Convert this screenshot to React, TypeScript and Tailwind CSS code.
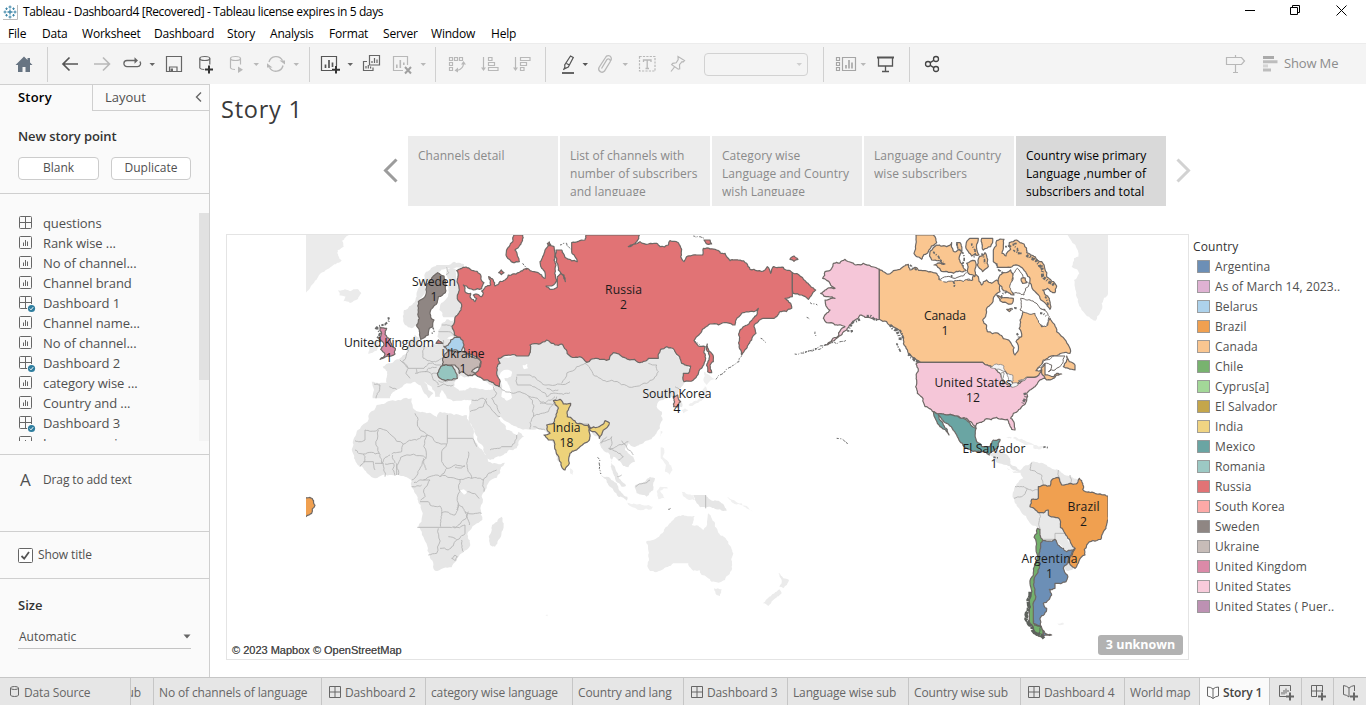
import React from "react";

type Pt = [number, number];

/* ---------- map geometry ---------- */

// Splits sloped segments with a repeatable offset, so coasts look natural; axis-aligned ones stay straight.
function split(a: Pt, b: Pt, depth: number): Pt[] {
  const dx = b[0] - a[0];
  const dy = b[1] - a[1];
  const len = Math.hypot(dx, dy);
  if (depth === 0 || len < 7 || dx === 0 || dy === 0) return [b];
  const s = Math.sin((a[0] + b[0]) * 12.9898 + (a[1] + b[1]) * 78.233) * 43758.5453;
  const r = s - Math.floor(s) - 0.5;
  const k = r * 0.32 * (a[0] < b[0] ? 1 : -1);
  const m: Pt = [(a[0] + b[0]) / 2 - dy * k, (a[1] + b[1]) / 2 + dx * k];
  return [...split(a, m, depth - 1), ...split(m, b, depth - 1)];
}

function shape(points: string, closed = true): string {
  return points
    .split("|")
    .map((part) => {
      const n = part.trim().split(/[\s,]+/).map(Number);
      const pts: Pt[] = [];
      for (let i = 0; i < n.length; i += 2) pts.push([n[i], n[i + 1]]);
      const out: Pt[] = [pts[0]];
      for (let i = 1; i < pts.length; i++) out.push(...split(pts[i - 1], pts[i], 3));
      if (closed) out.push(...split(pts[pts.length - 1], pts[0], 3));
      return "M" + out.map((p) => p[0].toFixed(1) + " " + p[1].toFixed(1)).join("L") + (closed ? "Z" : "");
    })
    .join("");
}

const Land = ({ d, fill = "#e6e6e6" }: { d: string; fill?: string }) => <path d={shape(d)} fill={fill} />;
const Sea = ({ d }: { d: string }) => <path d={shape(d)} fill="#fff" />;
const Country = ({ d, fill }: { d: string; fill: string }) => (
  <path d={shape(d)} fill={fill} stroke="#6e6865" strokeWidth="3.6" strokeLinejoin="round" />
);
const Borders = ({ d }: { d: string }) => <path d={shape(d, false)} fill="none" stroke="#b4b4b4" strokeWidth="2.6" />;
const Islets = ({ d, w = 4 }: { d: string; w?: number }) => (
  <path d={shape(d, false)} fill="none" stroke="#6a6a6a" strokeWidth={w} strokeDasharray="7 4 3 5 10 3" />
);

const Label = ({ x, y, name, n, w }: { x: number; y: number; name: string; n: number; w: number }) => (
  <g fill="#1b1b1b" textAnchor="middle" fontSize="36.5">
    <text x={(x - 300) * 3} y={(y - 231) * 3} textLength={w * 3} lengthAdjust="spacing">{name}</text>
    <text x={(x - 300) * 3} y={(y - 231 + 15.8) * 3}>{n}</text>
  </g>
);

function WorldMap() {
  return (
    <svg width="802" height="424" viewBox="18 15 2406 1272" className="block font-['Open_Sans',sans-serif]">
      {/* Greenland, Iceland, Europe, Asia */}
      <Land fill="#ebebeb" d="18 15 148 15 126 32 131 50 113 60 125 92 100 105 82 118 62 130 45 152 30 175 18 188" />
      <Land fill="#ebebeb" d="115 180 135 178 150 184 172 177 184 190 174 207 150 219 130 214 137 200 118 196" />
      <Land d="312 240 335 225 350 200 370 160 378 125 410 105 440 105 462 95 492 103 488 118 470 112 440 115 412 128 395 145 375 185 355 215 355 285 335 295 315 285 310 265" />
      <Land d="438 130 455 108 468 120 470 150 478 195 485 230 465 262 430 262 418 240 440 205 445 180" />
      <Land d="425 280 440 268 462 270 466 320 430 335 412 320 415 300" />
      <Land fill="#ebebeb" d="212 335 230 328 236 345 230 362 205 372 208 350" />
      <Land d="322 335 340 325 345 315 358 325 360 345 400 342 430 330 480 320 600 380 780 338 1000 360 1100 345 1150 400 1170 430 1152 460 1136 480 1128 500 1142 510 1146 532 1128 522 1124 502 1100 505 1078 512 1070 530 1086 545 1088 570 1080 595 1060 620 1030 640 1000 650 985 640 975 660 1000 680 1005 695 985 712 970 708 955 690 940 680 935 700 955 735 978 768 965 770 945 740 932 710 930 675 915 665 900 640 895 620 870 600 810 640 793 715 770 690 760 640 735 600 690 598 650 590 620 575 600 560 595 565 620 600 650 615 655 605 672 620 650 655 610 675 570 690 560 680 550 650 525 610 505 575 508 550 515 510 480 512 440 505 425 480 420 500 405 500 395 470 370 450 385 480 400 490 385 505 370 485 345 455 320 460 290 480 270 505 235 505 218 505 222 480 215 455 260 458 262 425 248 410 272 400 300 385 320 370" />
      <Sea d="468 448 482 436 505 442 530 438 552 452 585 472 570 480 540 478 510 472 478 482 462 470" />
      <Sea d="595 440 612 420 636 425 632 440 612 446 628 468 636 502 620 512 604 500 606 475" />
      <Sea d="668 405 682 402 684 415 672 418" />
      <Borders d="268 470 290 478 | 222 462 240 465 232 490 228 505 | 300 390 325 415 318 430 330 445 | 325 345 318 380 308 395 325 415 350 415 372 415 385 400 | 372 348 370 385 400 395 425 385 | 345 430 372 425 395 432 415 430 | 350 415 352 430 | 385 400 410 405 425 405 | 375 425 385 415 410 412 | 395 432 400 450 415 465 | 415 452 440 455 465 450 | 412 470 430 462 460 465 | 430 330 435 355 432 372 | 425 285 462 290 | 415 305 445 305 465 318" />
      <Borders d="440 112 446 128 438 135 | 580 470 590 490 575 505 | 600 470 640 490 690 500 720 515 760 525 | 650 435 690 435 720 455 750 465 810 455 | 650 440 652 465 690 465 720 480 740 500 770 490 810 488 | 785 460 830 410 855 400 | 740 475 775 480 | 765 500 740 515 720 520 | 685 500 700 560 690 598 | 735 600 700 590 | 700 560 745 545 770 500 | 575 505 600 550 | 515 510 550 505 580 545 600 560 | 510 545 550 530 560 505 | 570 660 605 650 635 650 | 635 650 650 625 650 615" />
      <Borders d="855 400 880 435 920 455 980 467 1040 460 1075 425 1070 405 1045 400 | 855 400 860 397 | 810 560 845 582 865 582 | 900 640 935 620 930 660 955 645 975 640 985 635 | 925 655 950 665 970 680 955 690 | 965 632 985 660 1000 675 | 1125 470 1140 480" />
      <Land fill="#efefef" d="1212 425 1228 435 1248 448 1228 455 1220 465 1210 450 | 1215 468 1222 480 1214 505 1195 518 1172 528 1165 525 1190 512 1208 490 | 1155 535 1165 540 1150 550 1145 540 | 1082 602 1088 605 1082 620" />
      <g transform="translate(120 450)">
        <Land d="75 130 110 75 150 62 215 55 225 90 260 100 290 112 300 95 330 100 380 105 387 125 400 165 430 215 445 245 495 248 480 280 440 325 425 350 427 420 385 455 390 490 365 520 335 562 285 572 270 525 250 470 235 440 242 375 225 340 215 300 195 290 155 285 105 295 70 265 42 235 40 180 50 155" />
        <Land d="485 410 491 430 475 480 465 500 450 495 446 470 456 435 472 425" />
        <Land fill="#ebebeb" d="918 485 960 465 985 435 1000 420 1030 405 1065 408 1055 435 1090 450 1104 400 1115 415 1125 440 1140 465 1165 485 1180 520 1175 560 1155 600 1115 605 1085 585 1078 570 1060 572 1045 550 1000 550 965 570 930 573 925 530 | 1122 625 1145 628 1140 648 1130 645" />
        <Land fill="#ebebeb" d="1315 578 1330 595 1347 600 1330 625 1318 620 1325 600 | 1318 628 1325 640 1300 660 1285 678 1268 670 1295 645" />
        <Land d="782 285 800 290 835 320 862 350 860 362 835 350 805 315 | 885 315 915 305 930 290 945 295 940 330 920 350 890 340 | 1060 345 1095 345 1130 362 1160 392 1140 388 1110 380 1080 382" />
        <Land fill="#f0f0f0" d="862 368 900 372 940 380 935 388 870 378 | 960 320 985 325 960 332 975 355 955 358 950 335 | 962 202 972 205 968 230 985 245 998 270 990 285 975 275 978 255 962 235 | 1025 335 1060 345 1065 360 1035 352 | 1160 350 1205 370 1240 395 1195 372 | 690 265 700 275 698 285 690 280" />
        <Borders d="120 145 190 192 230 180 262 165 240 150 225 100 | 75 150 110 152 120 145 | 75 150 75 180 45 182 | 115 150 118 220 70 222 | 322 105 322 187 | 322 175 398 175 | 262 165 320 192 | 262 165 258 235 182 232 | 190 192 185 215 155 222 | 118 220 125 250 150 225 | 45 210 70 222 75 240 | 75 240 60 260 | 70 245 100 245 105 270 | 105 250 130 250 135 290 | 135 252 160 250 165 287 | 158 225 165 250 | 170 250 170 285 | 182 232 175 285 | 258 235 240 265 215 300" />
        <Borders d="322 187 305 215 305 245 320 265 375 258 | 320 265 300 290 250 300 222 308 | 385 215 380 250 395 295 430 300 470 270 | 375 258 345 262 | 300 290 365 298 395 295 | 360 298 355 370 350 390 | 250 300 270 300 | 270 300 255 350 242 360 | 240 365 265 365 270 375 300 378 305 400 345 405 355 375 | 362 335 385 335 418 355 | 430 300 432 335 | 355 370 375 395 425 400 | 232 442 330 442 | 330 442 360 432 380 412 375 395 | 305 400 302 440 | 295 445 290 520 265 525 | 340 442 375 435 375 460 350 480 325 470 | 300 505 325 510 350 480 | 365 480 370 515 | 345 525 335 535 345 542 352 530 345 525 | 215 320 245 315 | 250 235 258 270 | 385 395 388 435 | 398 175 410 200" />
        <Sea d="360 332 372 328 384 335 372 344" />
        <Borders d="887 320 910 310 930 300 | 1097 345 1097 385 | 845 285 832 290 | 785 190 800 170" />
        <Islets w={3} d="773 232 780 240 778 265 783 282 | 985 388 992 385" />
      </g>
      <Land fill="#f2f2f2" d="736 1155 744 1154 742 1159" />

      {/* coloured Eurasia */}
      <Country fill="#8f8683" d="413 128 432 138 438 165 436 188 415 200 405 225 393 238 392 262 402 270 398 290 388 295 385 315 362 328 358 300 350 285 358 265 355 215 375 200 378 178 392 150 400 138" />
      <Islets d="398 292 402 305 395 310" />
      <Country fill="#e17375" d="470 122 490 112 520 122 540 132 552 158 545 176 520 180 500 168 490 165 495 185 512 190 513 205 525 215 530 205 520 195 530 192 545 200 550 190 545 183 572 165 566 140 580 150 585 168 590 165 615 150 625 135 655 128 680 115 702 125 725 135 735 145 730 120 720 95 728 80 735 60 745 45 762 50 765 75 768 105 764 130 770 150 755 168 738 168 750 178 772 172 772 140 782 130 796 155 792 135 775 120 770 85 768 60 785 60 800 85 832 95 815 65 815 38 855 30 858 15 1018 15 1010 35 985 50 1020 35 1045 42 1070 40 1080 50 1105 45 1110 32 1135 38 1142 80 1152 95 1160 80 1190 75 1208 75 1210 55 1250 60 1275 70 1290 92 1320 90 1340 100 1350 118 1395 120 1402 110 1412 130 1420 110 1450 112 1477 128 1477 200 1455 205 1472 220 1475 235 1440 245 1420 265 1390 265 1375 275 1362 290 1368 310 1355 330 1340 355 1325 375 1318 345 1316 315 1330 290 1350 275 1370 255 1375 235 1360 245 1345 246 1325 250 1308 270 1305 285 1280 278 1230 282 1205 305 1182 332 1195 348 1215 350 1217 385 1205 415 1180 450 1152 455 1150 430 1165 430 1172 408 1145 400 1125 365 1100 350 1082 358 1075 385 1045 385 1020 398 985 388 960 375 940 368 928 388 890 385 860 397 840 380 810 378 785 342 765 345 740 330 690 345 685 378 650 378 625 375 595 385 600 400 590 430 598 470 580 458 550 450 525 432 543 400 535 385 495 370 490 345 480 322 463 315 465 262 485 230 475 190 472 150" />
      <Country fill="#e17375" d="1477 128 1520 158 1547 180 1535 195 1525 208 1505 195 1480 190 1477 175 | 642 15 668 15 660 45 645 60 658 95 640 98 620 80 630 45 | 1222 342 1235 370 1240 395 1230 405 1235 428 1223 425 1227 390 1220 360 | 1470 88 1482 78 1494 88 1482 94 | 1212 30 1230 30 1235 42 1218 40 | 408 340 415 330 428 340 | 596 128 604 120 612 128 604 134 | 742 40 748 36 752 44 745 46" />
      <Islets w={3} d="668 100 680 120 | 1248 448 1270 430 1300 405 1325 378 | 1484 372 1530 362 1580 342 1640 330 | 1382 325 1398 338 | 1530 218 1552 225 | 1520 262 1530 268 | 1545 305 1548 318 | 780 45 800 40 815 60 | 1180 18 1212 25 | 1182 335 1200 345" />
      <Country fill="#d88aa6" d="240 292 260 295 255 313 270 330 286 355 285 372 262 378 240 388 255 372 242 358 252 345 236 325 245 310" />
      <Islets w={6} d="232 292 240 310 232 325 | 265 262 268 270 248 285 226 298 | 238 330 246 335" />
      <Country fill="#add2ec" d="463 322 480 322 492 345 485 365 445 362 432 350 445 345 452 330" />
      <Country fill="#c4b7b3" d="435 372 445 362 495 368 520 382 543 395 540 410 515 425 527 432 505 437 490 425 478 430 465 405 428 405" />
      <Country fill="#95c5bf" d="422 410 455 406 466 425 472 445 450 450 425 448 412 430" />
      <Country fill="#f7a7a4" d="1120 500 1133 495 1142 515 1134 531 1121 530" />
      <g transform="translate(120 450)">
        <Country fill="#edd27a" d="640 62 660 58 670 72 692 70 685 90 682 110 710 130 745 138 750 165 748 180 720 200 690 220 688 250 675 270 665 260 648 215 640 180 625 180 612 165 630 160 620 135 640 130 650 100 655 85 | 745 133 752 145 770 142 795 122 808 128 790 150 778 175 765 155 750 150" />
      </g>

      {/* North America */}
      <g transform="translate(1500 0)">
        <Land fill="#ebebeb" d="803 15 924 15 924 190 905 220 887 272 850 245 828 195 822 150 838 130 815 110 822 85 835 80" />
        <Country fill="#f5c6d8" d="238 118 238 268 215 265 195 262 180 255 165 270 140 300 110 325 78 345 115 318 135 290 105 285 80 278 70 265 90 240 78 228 75 210 105 205 85 200 62 190 75 180 105 175 90 160 68 145 75 125 95 115 100 100 135 88 155 98 190 100 215 110" />
        <Islets w={7} d="180 268 160 275 145 305 | 200 258 232 270 | 155 300 158 310" />
        <Islets w={3} d="78 345 40 358 10 366" />
        <Country fill="#fac690" d="238 118 268 132 280 122 300 118 325 103 330 120 345 112 370 122 410 130 420 150 462 150 490 145 518 150 525 130 535 140 545 165 560 150 575 160 590 150 600 185 580 205 560 235 548 270 562 305 595 310 630 335 645 375 655 360 648 335 665 320 660 270 668 237 690 238 715 260 725 290 743 285 750 265 770 305 805 345 810 370 765 378 730 390 708 422 725 420 735 435 710 440 680 442 640 465 620 430 600 415 580 410 548 397 362 397 345 385 325 370 310 330 280 290 260 275 238 268" />
        <Country fill="#fac690" d="348 15 400 15 410 38 385 65 365 88 342 70 | 390 65 410 45 440 50 455 38 462 65 475 60 470 38 480 38 484 65 480 95 498 122 460 130 430 125 402 105 435 102 395 90 | 498 45 510 25 535 25 537 75 515 78 505 65 | 545 25 578 25 572 50 550 60 | 538 80 555 68 565 110 548 125 532 105 | 500 100 525 92 524 140 505 130" />
        <Country fill="#fac690" d="612 28 590 32 580 60 580 95 592 112 620 112 640 106 668 115 690 145 695 170 720 205 750 238 748 205 728 180 742 175 765 188 770 168 740 140 735 118 705 80 680 68 672 42 650 30 628 38 632 58 618 78 606 70 | 600 135 632 120 635 165 642 195 610 182 595 160 | 590 195 640 205 635 222 600 212" />
        <Country fill="#fac690" d="790 410 800 378 808 395 825 405 825 420 805 415 | 735 435 760 440 770 430 785 432 760 445 740 450 722 432 735 400" />
        <Islets w={9} d="680 75 705 90 725 110 740 150 762 165 | 270 285 290 300 300 330 | 325 372 340 385 358 400" />
        <Islets w={5} d="300 300 308 325 | 290 340 302 365 | 515 40 525 60 522 85 | 545 70 555 100 | 590 100 608 130 | 620 185 600 210 | 735 200 742 230 | 470 40 490 110 | 700 235 740 240 | 455 135 462 170 | 650 40 615 50 | 640 40 655 75 | 330 105 350 120 | 640 60 665 70 | 400 65 430 95" />
        <Sea d="415 148 440 140 490 138 500 128 510 148 470 152 430 155" />
        <path d={shape("415 148 440 140 490 138 500 128 | 430 155 470 152 510 148", false)} fill="none" stroke="#6e6865" strokeWidth="3" />
        <path d={shape("660 240 662 205 690 210 720 235 748 260 738 290 722 285 705 250 | 640 130 652 115 668 135 690 160 672 195 640 190 630 165")} fill="#fff" stroke="#6e6865" strokeWidth="3" />
        <Islets w={6} d="650 310 655 325 | 625 240 650 235 | 720 250 738 258" />
        <Country fill="#fac690" d="664 145 676 144 680 158 668 160 | 620 238 634 235 628 245" />
        <Country fill="#f5c6d8" d="358 397 548 397 580 410 600 430 625 465 645 465 680 442 710 440 725 418 735 445 705 470 680 490 672 525 640 550 632 565 645 600 635 598 622 568 590 562 555 568 530 580 528 595 500 565 470 558 430 552 400 545 375 530 352 490 350 450 355 420 348 402" />
        <path d={shape("570 412 590 402 612 408 615 425 590 418 | 602 430 612 428 610 465 600 462 | 622 430 638 435 640 452 625 455 | 630 465 650 458 655 465 635 472 | 655 452 680 442 672 452")} fill="#f4f4f4" stroke="#8a8583" strokeWidth="2.5" />
        <path d={shape("712 415 732 392 762 378 795 378 788 400 765 420 745 425 755 405 735 400")} fill="#fff" stroke="#6e6865" strokeWidth="3" />
        <Islets w={8} d="674 488 668 520" />
        <Country fill="#6aa5a3" d="400 545 430 552 470 558 500 570 528 595 530 635 545 650 570 650 580 630 600 628 592 655 568 675 540 665 500 655 480 635 470 615 440 580 415 555 430 585 447 615 420 590 408 570" />
        <Land d="568 672 592 655 600 668 625 678 635 705 660 720 655 725 620 705" />
        <Land fill="#efefef" d="618 622 645 620 670 630 705 648 680 645 650 632 | 700 645 730 650 722 658 700 655" />
        <Islets w={5} d="730 652 744 653 | 580 682 595 684" />
        <Islets w={3} d="110 625 130 630 145 645" />
      </g>

      {/* South America */}
      <g transform="translate(2040 630)">
        <Land fill="#e8e8e8" d="80 85 100 95 122 90 130 80 155 65 200 75 235 90 275 110 300 125 290 200 250 260 285 325 265 335 225 300 190 298 178 265 150 250 120 210 100 175 105 140 130 115 122 98 100 98" />
        <Land fill="#e3e3e3" d="262 360 285 385 265 393 252 385" />
        <Land fill="#f0f0f0" d="232 550 250 548 252 553 236 555" />
        <Borders d="155 68 150 90 185 105 190 135 | 105 140 140 145 175 150 | 140 145 125 170 102 175 | 178 218 180 265 | 235 90 240 115 | 270 105 272 130 | 190 298 225 298 225 280 255 280" />
        <Country fill="#f0a050" d="175 140 195 135 210 138 215 120 235 112 245 135 270 130 288 132 298 115 308 148 345 160 384 168 384 230 378 265 362 298 320 315 315 345 285 385 265 360 285 325 268 298 255 280 240 240 205 225 205 210 175 218 150 200 155 178 175 175" />
        <Country fill="#6c8fb6" d="185 300 225 298 250 325 260 335 285 325 265 355 250 385 262 405 258 425 225 430 225 445 208 448 215 465 190 490 200 505 180 535 185 565 195 580 215 585 190 588 180 560 160 550 155 500 160 440 175 360" />
        <Country fill="#73b06c" d="172 265 180 268 188 300 177 340 174 390 162 440 160 500 160 550 182 558 188 590 165 580 148 545 148 480 150 430 163 380 168 320" />
        <path d={shape("150 455 144 480 139 520 146 552 163 578 192 595", false)} fill="none" stroke="#5d615c" strokeWidth="10" strokeDasharray="20 1 9 2" />
        <path d={shape("162 555 182 560 178 580", false)} fill="none" stroke="#5d615c" strokeWidth="3" />
      </g>
      <Country fill="#f0a050" d="10 800 30 802 45 826 35 850 10 868" />

      <Label x={434} y={286.5} name="Sweden" n={1} w={44} />
      <Label x={389} y={347.5} name="United Kingdom" n={1} w={90} />
      <Label x={463} y={358.5} name="Ukraine" n={1} w={43} />
      <Label x={623.5} y={294.5} name="Russia" n={2} w={37} />
      <Label x={677} y={398.5} name="South Korea" n={4} w={69} />
      <Label x={566.5} y={432.5} name="India" n={18} w={28} />
      <Label x={945} y={320.5} name="Canada" n={1} w={42} />
      <Label x={973} y={387.5} name="United States" n={12} w={77} />
      <Label x={994} y={453.5} name="El Salvador" n={1} w={63} />
      <Label x={1083.5} y={511.5} name="Brazil" n={2} w={32} />
      <Label x={1049.5} y={563.5} name="Argentina" n={1} w={56} />
    </svg>
  );
}

/* ---------- icons ---------- */

const Ico = ({ children, c = "#666" }: { children: React.ReactNode; c?: string }) => (
  <svg width="24" height="24" viewBox="0 0 24 24" fill="none" stroke={c} strokeWidth="1.2" className="block shrink-0">
    {children}
  </svg>
);
const DIM = "#b8b8b8";
const Sep = ({ className }: { className: string }) => <i className={`h-[35px] w-px shrink-0 bg-[#d0d0d0] ${className}`} />;
const Caret = ({ className, c = "#666" }: { className: string; c?: string }) => (
  <svg width="8" height="8" viewBox="0 0 8 8" className={`block shrink-0 ${className}`}>
    <path d="M1.500 3h5.500L4.250 6z" fill={c} />
  </svg>
);
const At = ({ className, children }: { className: string; children: React.ReactNode }) => (
  <span className={`shrink-0 ${className}`}>{children}</span>
);

const SheetGlyph = () => (
  <svg width="14" height="14" viewBox="0 0 14 14" fill="none" stroke="#666" className="block shrink-0">
    <rect x=".5" y=".5" width="12" height="12" rx="1" />
    <path d="M4.500 10V6.500M6.500 10V4M8.500 10V5.500" />
  </svg>
);
const GridGlyph = ({ used = false }: { used?: boolean }) => (
  <svg width="18" height="17" viewBox="0 0 18 17" fill="none" stroke="#666" className="block shrink-0">
    <path d="M1.500.5h10q1 0 1 1v10q0 1-1 1h-10q-1 0-1-1v-10q0-1 1-1zM6.500.5v12M.5 6.500h12" />
    {used && (
      <>
        <circle cx="12.500" cy="12.500" r="4.500" fill="#fafafa" stroke="none" />
        <circle cx="12.500" cy="12.500" r="3.600" fill="#2e7d9e" stroke="none" />
        <path d="M10.800 12.600l1.200 1.200 2.200-2.600" stroke="#fff" />
      </>
    )}
  </svg>
);
const TabGrid = () => (
  <svg width="12" height="12" viewBox="0 0 12 12" fill="none" stroke="#666" className="mr-1 mb-0.5 block shrink-0">
    <path d="M.5.5h11v11H.5zM6 .5v11M.5 6h11" />
  </svg>
);

function Toolbar() {
  return (
    <div className="flex h-[41px] items-center border-t border-[#ececec] bg-[#f4f4f4] pl-3">
      <Ico><path d="M12 4.500 3.500 13H6v7h4.500v-5h3v5H18v-7h2.500L18 10.500V6h-2.500v2z" fill="#677482" stroke="none" /></Ico>
      <Sep className="ml-[11px]" />
      <At className="ml-2.5"><Ico c="#555"><path d="M20 12H5M11.500 5.500 5 12l6.500 6.500" strokeWidth="1.700" /></Ico></At>
      <At className="ml-2"><Ico c={DIM}><path d="M4 12h15.500M13 5.500l6.500 6.500-6.500 6.500" strokeWidth="1.600" /></Ico></At>
      <At className="ml-1.5">
        <Ico><path d="M15 8.500H7a3.100 3.100 0 0 0 0 6.200h10.500a3.100 3.100 0 0 0 2.300-5.200" strokeWidth="1.300" /><path d="M14.500 5.300 18 8.500l-3.500 3.200z" fill="#666" stroke="none" /></Ico>
      </At>
      <Caret className="ml-1" />
      <At className="ml-1.5">
        <Ico><path d="M4.500 4.500h15v15h-15zM7.500 19.500v-4.500h7.500v4.500" /><path d="M8.500 16.500h2.500v3H8.500z" fill="#666" stroke="none" /></Ico>
      </At>
      <At className="ml-2">
        <Ico>
          <ellipse cx="10.800" cy="6.500" rx="5" ry="2" /><path d="M5.800 6.500v9.500q1 1.500 4.500 1.500M15.800 6.500v6" />
          <path d="M15 13.500v8M11 17.500h8" stroke="#333" strokeWidth="2" />
        </Ico>
      </At>
      <At className="ml-[7px]">
        <Ico c={DIM}>
          <ellipse cx="10.500" cy="6.500" rx="5" ry="2" /><path d="M5.500 6.500v9.500q1 1.500 4.500 1.500M15.500 6.500v6" />
          <path d="M13 14.500v6.500l5-3.200z" fill={DIM} stroke="none" />
        </Ico>
      </At>
      <Caret className="ml-[3px]" c={DIM} />
      <At className="ml-1">
        <Ico c={DIM}><path d="M5 10a7.300 7.300 0 0 1 13.500-1.500M19 13.500A7.300 7.300 0 0 1 5.500 15.500" strokeWidth="1.400" /><path d="M15.500 8.500h5.500v4zM8.500 15.500H3v-4.200z" fill={DIM} stroke="none" /></Ico>
      </At>
      <Caret className="ml-1" c={DIM} />
      <Sep className="ml-[9px]" />
      <At className="ml-2">
        <Ico c="#555"><path d="M14 18.500H3.500v-14h15V14" /><path d="M7.500 16v-3.500M11 16V8M14.500 15V10.500" strokeWidth="1.700" /><path d="M18 14v7.500M14 17.700h8" stroke="#333" strokeWidth="2" /></Ico>
      </At>
      <Caret className="ml-1" />
      <At className="ml-[5px]">
        <Ico><path d="M10.500 3.500h10v9.500h-10zM8 9.500H4.500V18.500h9.500V15.500" /><path d="M13 11V9M15.500 11V6M18 11V7.500M7 16.500V14M9.300 16.500V13M11.600 16.500V14.500" /></Ico>
      </At>
      <At className="ml-2">
        <Ico c={DIM}><path d="M12 18.500H2.500v-14h14V13" /><path d="M5.800 16v-3.500M9.300 16V8M12.800 13V10.500" strokeWidth="1.600" /><path d="m14 15 6 6.500m0-6.500-6 6.500" stroke="#a0a0a0" strokeWidth="2" /></Ico>
      </At>
      <Caret className="ml-1" c={DIM} />
      <Sep className="ml-2" />
      <At className="ml-[9px]">
        <Ico c={DIM}>
          <path d="M4.500 5.500h3v3h-3zM9.500 5.500h3v3h-3zM14.500 5.500h3v3h-3zM4.500 10.500h3v3h-3zM4.500 15.500h3v3h-3z" />
          <path d="M18.500 11q0 6-6.500 7.500" /><path d="m16 12.500 2.500-3.500 2.500 3.500zM13 15.500v5l-3.500-2z" fill={DIM} stroke="none" />
        </Ico>
      </At>
      <At className="ml-[9px]">
        <Ico c={DIM}><path d="M5.500 5v12" /><path d="M3 15.500h5l-2.500 3.500z" fill={DIM} stroke="none" /><path d="M10.500 5.500h3.500v3h-3.500zM10.500 10.500h6v3h-6zM10.500 15.500h9.500v3h-9.500z" /></Ico>
      </At>
      <At className="ml-2">
        <Ico c={DIM}><path d="M5.500 5v12" /><path d="M3 15.500h5l-2.500 3.500z" fill={DIM} stroke="none" /><path d="M10.500 5.500h9.500v3h-9.500zM10.500 10.500h6v3h-6zM10.500 15.500h3.500v3h-3.500z" /></Ico>
      </At>
      <Sep className="ml-[11px]" />
      <At className="ml-2.5">
        <Ico c="#555"><path d="m14.500 4 2.800 1.600-5 9.400-3.300 1.500-.3-3.500zM10.500 11.500l2.800 1.600M8.700 15.500 7.500 18" strokeWidth="1.200" /><path d="M6 21h12" strokeWidth="1.800" /></Ico>
      </At>
      <Caret className="ml-px" c="#555" />
      <At className="ml-1">
        <Ico c={DIM}><path d="M8.500 16.500 14 7.500a2 2 0 0 1 3.300 2L11.500 19a3.300 3.300 0 0 1-5.500-3.500L12.500 5.500a3 3 0 0 1 5.500-.2 3.500 3.500 0 0 1-.2 3.400" strokeWidth="1.300" /></Ico>
      </At>
      <Caret className="ml-1" c={DIM} />
      <At className="ml-1.5">
        <Ico c={DIM}>
          <rect x="4.500" y="4.500" width="15.500" height="14.500" strokeDasharray="2.200 1.200" />
          <path d="M8.500 10V8h7.500v2M12.200 8v8.500M10.500 16.500h3.500" strokeWidth="1.300" />
        </Ico>
      </At>
      <At className="ml-1.5">
        <Ico c={DIM}><path d="m13 4.500 6.500 4-1.500 1.500-1-.3-2.500 3 .2 4-1.500.5-6.500-4.500 1-1.300 3.500-.6 2-3.200zM9.500 15 6 19.500" /></Ico>
      </At>
      <div className="ml-[15px] flex h-[23px] w-[104px] shrink-0 items-center justify-end rounded-sm border border-[#d2d2d2] pr-1">
        <Caret className="" c="#cfcfcf" />
      </div>
      <Sep className="ml-[15px]" />
      <At className="ml-2.5">
        <Ico c="#a5a5a5"><path d="M2.500 5.500h3v3h-3zM2.500 10.500h3v3h-3zM2.500 15.500h3v3h-3zM8.500 5.500h13v13h-13z" /><path d="M12 16.500V13M15 16.500V8M18 16.500V10.500" strokeWidth="1.600" /></Ico>
      </At>
      <Caret className="ml-px" c={DIM} />
      <At className="ml-[7px]">
        <Ico c="#555"><path d="M3 5.500h17" strokeWidth="2" /><path d="M4.500 6v8h14V6M11.500 14v5M8 19.500h7" strokeWidth="1.300" /></Ico>
      </At>
      <Sep className="ml-[11px]" />
      <At className="ml-2.5">
        <Ico c="#444"><circle cx="8" cy="12" r="2.500" strokeWidth="1.300" /><circle cx="16" cy="7" r="2.500" strokeWidth="1.300" /><circle cx="16" cy="17" r="2.500" strokeWidth="1.300" /><path d="m10.200 10.600 3.600-2.200M10.200 13.400l3.600 2.200" strokeWidth="1.300" /></Ico>
      </At>
      <At className="mr-4 ml-auto">
        <Ico c={DIM}><path d="M3.500 5.500h15l3 3.500-3 3.500h-15zM12.500 3v2.500M12.500 12.500v8M10 20.500h5" /></Ico>
      </At>
      <svg width="15" height="16" viewBox="0 0 15 16" className="block shrink-0">
        <path d="M0 0h11v3H0z" fill="#aaa" /><path d="M0 4.300h14.500v3H0zM0 12.500h8v3H0z" fill="#bdbdbd" /><path d="M0 8.400h5v3H0z" fill="#d5d5d5" />
      </svg>
      <span className="mr-[28px] ml-1.5 w-[54px] text-[13px] tracking-[-0.15px] whitespace-nowrap text-[#8c8c8c]">Show Me</span>
    </div>
  );
}

/* ---------- side panel ---------- */

const items: [string, "sheet" | "grid" | "used"][] = [
  ["questions", "grid"], ["Rank wise ...", "sheet"], ["No of channel...", "sheet"], ["Channel brand", "sheet"],
  ["Dashboard 1", "used"], ["Channel name...", "sheet"], ["No of channel...", "sheet"], ["Dashboard 2", "used"],
  ["category wise ...", "sheet"], ["Country and ...", "sheet"], ["Dashboard 3", "used"], ["Language wi...", "sheet"],
];

function SidePanel() {
  return (
    <aside className="flex h-[593px] w-[210px] shrink-0 flex-col border-t border-r border-[#cfcfcf] bg-[#fafafa] text-[#505050]">
      <div className="flex h-[26px] text-[13px] leading-[26px]">
        <span className="w-[92px] pl-[18px] leading-[25px] font-semibold tracking-[0.2px] text-black">Story</span>
        <span className="flex flex-1 items-center justify-between border-b border-l border-[#cfcfcf] pr-[7px] pb-px pl-3">
          Layout
          <svg width="7" height="10" viewBox="0 0 7 10" fill="none" stroke="#666" strokeWidth="1.400"><path d="M6 .5 1.500 5 6 9.500" /></svg>
        </span>
      </div>
      <div className="h-[83px] border-b border-[#cfcfcf] px-[18px] pt-[15px]">
        <h2 className="text-[13px] leading-5 font-semibold tracking-[-0.1px] text-[#333]">New story point</h2>
        <div className="mt-[11px] flex gap-3 text-center text-[12px] leading-5">
          <button className="h-[23px] w-[81px] rounded-sm border border-[#ccc] bg-white pb-px">Blank</button>
          <button className="h-[23px] w-20 rounded-sm border border-[#ccc] bg-white pb-px">Duplicate</button>
        </div>
      </div>
      <div className="mt-[19px] flex h-[228px] justify-between overflow-hidden">
        <ul className="pl-[19px] text-[13px] tracking-[-0.08px]">
          {items.map(([name, kind], i) => (
            <li key={i} className="flex h-5 items-start">
              <span className="w-6 pt-[3px]">{kind === "sheet" ? <SheetGlyph /> : <GridGlyph used={kind === "used"} />}</span>
              <span className="leading-[21px] whitespace-nowrap">{name}</span>
            </li>
          ))}
        </ul>
        <div className="h-full w-2.5 bg-[#f4f4f4]"><div className="h-[167px] bg-[#e1e1e1]" /></div>
      </div>
      <div className="mt-[13px] flex h-[78px] border-t border-b border-[#cfcfcf] pt-[13px] pl-5 text-[12px] leading-6 tracking-[-0.12px]">
        <span className="w-[23px] text-[17px]">A</span>Drag to add text
      </div>
      <div className="flex h-[47px] items-center border-b border-[#cfcfcf] pl-[18px] text-[12px] tracking-[-0.1px]">
        <svg width="15" height="15" viewBox="0 0 15 15" fill="none" className="mr-[5px]">
          <rect x=".5" y=".5" width="14" height="14" rx="1" fill="#fff" stroke="#666" /><path d="m3.500 8 2.700 2.700L11 4" stroke="#555" strokeWidth="1.800" />
        </svg>
        Show title
      </div>
      <div className="px-[18px] pt-4">
        <h2 className="text-[13px] leading-5 font-semibold text-[#333]">Size</h2>
        <div className="mt-2.5 flex h-6 items-center justify-between border-b border-[#c4c4c4] pl-px text-[12px]">
          Automatic
          <svg width="8" height="5" viewBox="0 0 8 5"><path d="M.5.5h7L4 4.500z" fill="#666" /></svg>
        </div>
      </div>
    </aside>
  );
}

/* ---------- story ---------- */

const points = [
  ["Channels detail"],
  ["List of channels with", "number of subscribers", "and language"],
  ["Category wise", "Language and Country", "wish Language"],
  ["Language and Country", "wise subscribers"],
  ["Country wise primary", "Language ,number of", "subscribers and total"],
];

const legend: [string, string][] = [
  ["Argentina", "#6c8fb6"], ["As of March 14, 2023..", "#dfb2d3"], ["Belarus", "#add2ec"], ["Brazil", "#f0a050"],
  ["Canada", "#fac690"], ["Chile", "#78b36f"], ["Cyprus[a]", "#a3d898"], ["El Salvador", "#c4a64b"],
  ["India", "#f0d482"], ["Mexico", "#6aa5a3"], ["Romania", "#9cc9c4"], ["Russia", "#e17375"],
  ["South Korea", "#fda9a7"], ["Sweden", "#8f8683"], ["Ukraine", "#c7bcb8"], ["United Kingdom", "#db8aa8"],
  ["United States", "#f8cbdb"], ["United States ( Puer..", "#bd91b3"],
];

function Story() {
  return (
    <main className="flex h-[593px] min-w-0 flex-1 flex-col bg-white">
      <h1 className="h-[52px] pt-2 pl-[11px] text-[23.5px] leading-[34px] tracking-[0.75px] text-[#3a3a3a]">Story 1</h1>
      <div className="flex h-[70px] items-center pl-[173px]">
        <svg width="15" height="26" viewBox="0 0 15 26" fill="none" stroke="#9c9c9c" strokeWidth="3"><path d="M13.500 1.500 2.500 12.500l11 11" /></svg>
        <div className="ml-2.5 flex gap-0.5">
          {points.map((lines, i) => (
            <div key={i} className={i === 4 ? "h-[70px] w-[150px] bg-[#d9d9d9] px-2.5 pt-[11px] text-black" : "h-[70px] w-[150px] bg-[#ececec] px-2.5 pt-[11px] text-[#8a8a8a]"}>
              <div className="h-[49px] overflow-hidden text-[12px] leading-[18px] tracking-[0.03px] whitespace-nowrap">
                {lines.map((l) => <div key={l}>{l}</div>)}
              </div>
            </div>
          ))}
        </div>
        <svg width="15" height="26" viewBox="0 0 15 26" fill="none" stroke="#d2d2d2" strokeWidth="3" className="ml-2.5"><path d="m1.500 1.500 11 11-11 11" /></svg>
      </div>
      <div className="mt-7 flex pl-4">
        <section className="relative h-[426px] w-[963px] shrink-0 border border-[#e4e4e4] pl-[79px]">
          <WorldMap />
          <p className="absolute bottom-px left-[5px] font-['Liberation_Sans',sans-serif] text-[11px] leading-4 text-[#4a4a4a] [text-shadow:0_0_0.6px_#666]">© 2023 Mapbox © OpenStreetMap</p>
          <span className="absolute right-[5px] bottom-1 h-5 w-[85px] rounded-[3px] bg-[#b2b2b2] text-center text-[12.500px] leading-5 font-bold text-white">3 unknown</span>
        </section>
        <section className="ml-1 w-[160px] pt-[3px] text-[12px] tracking-[0.1px] text-[#505050]">
          <h3 className="h-5 leading-5 text-[#333]">Country</h3>
          <ul>
            {legend.map(([name, color]) => (
              <li key={name} className="flex h-5 items-center pl-1 leading-5 whitespace-nowrap">
                <svg width="13" height="13" className="mr-[5px] mb-0.5 shrink-0"><rect x=".5" y=".5" width="12" height="12" fill={color} stroke="#8a8a8a" strokeOpacity=".8" /></svg>
                {name}
              </li>
            ))}
          </ul>
        </section>
      </div>
    </main>
  );
}

/* ---------- sheet tabs ---------- */

const Tab = ({ className, children }: { className: string; children: React.ReactNode }) => (
  <div className={`flex h-full shrink-0 items-center overflow-hidden border-r border-[#c6c6c6] pt-0.5 whitespace-nowrap ${className}`}>{children}</div>
);
const Plus = () => <path d="M13 8.500v8M9 12.500h8" strokeWidth="2" />;

function SheetTabs() {
  return (
    <footer className="flex h-7 border-t border-[#c6c6c6] bg-[#e6e6e6] font-['Open_Sans',sans-serif] text-[12px] tracking-[-0.14px] text-[#666]">
      <Tab className="w-[131px] pl-2.5">
        <svg width="9" height="11" viewBox="0 0 9 11" fill="none" stroke="#666" className="mr-[5px] mb-0.5"><ellipse cx="4.500" cy="2" rx="4" ry="1.500" /><path d="M.5 2v7q0 1.500 4 1.500t4-1.500V2" /></svg>
        Data Source
      </Tab>
      <Tab className="w-[23px] justify-end pr-3">sub</Tab>
      <Tab className="w-[168px] pl-[5px]">No of channels of language</Tab>
      <Tab className="w-[104px] pl-[7px]"><TabGrid />Dashboard 2</Tab>
      <Tab className="w-[147px] pl-[5px]">category wise language</Tab>
      <Tab className="w-[111px] pl-[5px]">Country and lang</Tab>
      <Tab className="w-[104px] pl-[7px]"><TabGrid />Dashboard 3</Tab>
      <Tab className="w-[121px] pl-[5px]">Language wise sub</Tab>
      <Tab className="w-[112px] pl-[5px]">Country wise sub</Tab>
      <Tab className="w-[104px] pl-[7px]"><TabGrid />Dashboard 4</Tab>
      <Tab className="w-[75px] pl-[5px]">World map</Tab>
      <Tab className="w-[70px] bg-[#fafafa] pl-[7px] font-semibold text-[#444]">
        <svg width="12" height="13" viewBox="0 0 12 13" fill="none" stroke="#666" className="mr-1 shrink-0"><path d="M6 3v9.500M6 3Q4 1 .5 1v9Q4 10.500 6 12.500 8 10.500 11.500 10V1Q8 1 6 3z" /></svg>
        Story 1
      </Tab>
      <Tab className="w-8 justify-center">
        <svg width="18" height="17" viewBox="0 0 18 17" fill="none" stroke="#666"><path d="M9 12.500H2.500v-11h11V7" /><path d="M5 10.500V8M7 10.500V6M9 9.500V4.500M11 8V6" /><Plus /></svg>
      </Tab>
      <Tab className="w-8 justify-center">
        <svg width="18" height="17" viewBox="0 0 18 17" fill="none" stroke="#666"><path d="M8 12.500H2.500v-11h11V8M7.500 1.500v11M2.500 7h11" /><Plus /></svg>
      </Tab>
      <Tab className="w-8 justify-center border-r-0">
        <svg width="18" height="17" viewBox="0 0 18 17" fill="none" stroke="#666"><path d="M8 13V4Q6 2 2.500 1.500v9Q6 11 8 13M8 4q2-2 5.500-2.500V7" /><Plus /></svg>
      </Tab>
    </footer>
  );
}

const menu: [string, string][] = [
  ["File", "w-[34px]"], ["Data", "w-10"], ["Worksheet", "w-[72px]"], ["Dashboard", "w-[73px]"], ["Story", "w-[43px]"], ["Analysis", "w-[59px]"],
  ["Format", "w-[54px]"], ["Server", "w-12"], ["Window", "w-[60px]"], ["Help", "w-10"],
];

export default function App() {
  return (
    <div className="flex h-[705px] w-[1366px] flex-col overflow-hidden bg-white font-['Open_Sans',sans-serif] text-[#333]">
      <header className="h-[43px] text-[12px] text-black">
        <div className="flex h-6 items-center pl-[3px]">
          <svg width="15" height="15" viewBox="0 0 15 15" className="mr-[5px] shrink-0" fill="none" stroke="#3f86a8">
            <path d="M14.500 0v14.500H0" stroke="#bbb" />
            <path d="M7 4.500v5M4.500 7h5" strokeWidth="1.300" />
            <path d="M7 .5v3M5.500 2h3M7 10.500v3M5.500 12h3M.5 7h3M2 5.500v3M10.500 7h3M12 5.500v3M3.500 2.500v2.500M2.300 3.700h2.500M10.500 2.500v2.500M9.300 3.700h2.500M3.500 9v2.500M2.300 10.300h2.500M10.500 9v2.500M9.300 10.300h2.500" />
          </svg>
          <span className="tracking-[-0.37px] whitespace-nowrap">Tableau - Dashboard4 [Recovered] - Tableau license expires in 5 days</span>
          <svg width="110" height="20" viewBox="0 0 110 20" fill="none" stroke="#000" className="mr-[15px] mb-1 ml-auto">
            <path d="M4 10.500h10M49.500 7.500h7v7h-7zM51.500 7.500v-2h7v7h-2M95.500 5.500l10 10m0-10-10 10" />
          </svg>
        </div>
        <nav className="flex h-[19px] items-center pl-2 leading-5 tracking-[-0.2px]">
          {menu.map(([m, w]) => <span key={m} className={`shrink-0 ${w}`}>{m}</span>)}
        </nav>
      </header>
      <Toolbar />
      <div className="flex">
        <SidePanel />
        <Story />
      </div>
      <SheetTabs />
    </div>
  );
}
